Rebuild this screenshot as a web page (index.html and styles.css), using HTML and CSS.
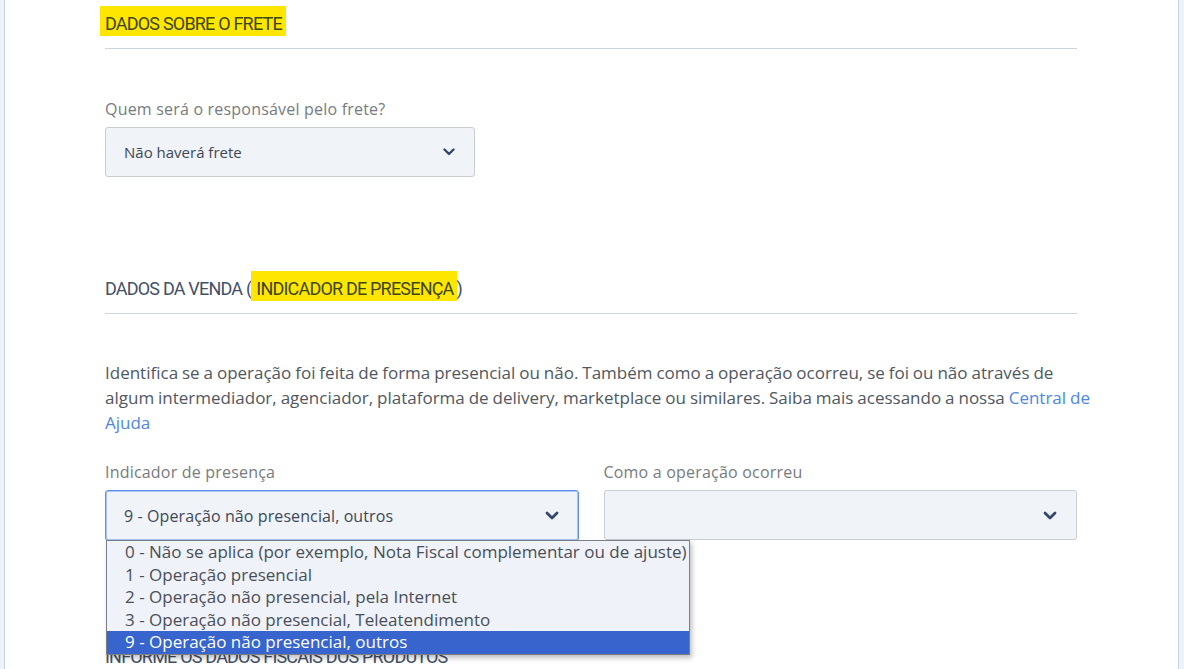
FILE: index.html
```html
<!DOCTYPE html>
<html lang="pt-BR">
<head>
    <meta charset="UTF-8">
    <title>Emissão de NF-e - Dados da venda</title>
    <link rel="stylesheet" href="styles.css">
</head>
<body>
    <div class="page">
        <div class="form">
            <!-- frete -->
            <section class="section section--frete">
                <h2 class="section__title"><span class="mark mark--first">DADOS SOBRE O FRETE</span></h2>
                <div class="field field--half">
                    <label class="field__label">Quem será o responsável pelo frete?</label>
                    <div class="select">
                        <span class="select__value">Não haverá frete</span>
                        <svg class="select__arrow" width="12" height="8" viewBox="0 0 12 8"><path d="M1.5 1.5 6 6l4.5-4.5" fill="none" stroke="currentColor" stroke-width="2.4" stroke-linecap="round" stroke-linejoin="round"/></svg>
                    </div>
                </div>
            </section>

            <!-- venda -->
            <section class="section section--venda">
                <h2 class="section__title">DADOS DA VENDA (<span class="mark">INDICADOR DE PRESENÇA</span>)</h2>
                <p class="section__text">
                    Identifica se a operação foi feita de forma presencial ou não. Também como a operação ocorreu, se foi ou não através de
                    algum intermediador, agenciador, plataforma de delivery, marketplace ou similares. Saiba mais acessando a nossa <a href="#" class="link">Central de Ajuda</a>
                </p>
                <div class="row">
                    <div class="field">
                        <label class="field__label">Indicador de presença</label>
                        <div class="select select--open">
                            <span class="select__value select__value--big">9 - Operação não presencial, outros</span>
                            <svg class="select__arrow" width="14" height="9" viewBox="0 0 14 9"><path d="M2 2l5 5 5-5" fill="none" stroke="currentColor" stroke-width="2.8" stroke-linecap="round" stroke-linejoin="round"/></svg>
                            <ul class="options">
                                <li class="option">0 - Não se aplica (por exemplo, Nota Fiscal complementar ou de ajuste)</li>
                                <li class="option">1 - Operação presencial</li>
                                <li class="option">2 - Operação não presencial, pela Internet</li>
                                <li class="option">3 - Operação não presencial, Teleatendimento</li>
                                <li class="option option--active">9 - Operação não presencial, outros</li>
                            </ul>
                        </div>
                    </div>
                    <div class="field">
                        <label class="field__label">Como a operação ocorreu</label>
                        <div class="select">
                            <span class="select__value"></span>
                            <svg class="select__arrow" width="14" height="9" viewBox="0 0 14 9"><path d="M2 2l5 5 5-5" fill="none" stroke="currentColor" stroke-width="2.8" stroke-linecap="round" stroke-linejoin="round"/></svg>
                        </div>
                    </div>
                </div>
            </section>

            <!-- produtos -->
            <section class="section section--produtos">
                <h2 class="section__title">INFORME OS DADOS FISCAIS DOS PRODUTOS</h2>
            </section>
        </div>
    </div>
</body>
</html>
```

FILE: styles.css
```css
html,
body {
    margin: 0;
    height: 100%;
    overflow: hidden;
}

body {
    font-family: "Open Sans", Lato, sans-serif;
    font-size: 16px;
    color: #555c66;
    background: #eef2f9;
}

.page {
    box-sizing: border-box;
    height: 100%;
    margin: 0 5px 0 4px;
    background: #fff;
    border-left: 1px solid #c9d2e4;
    border-right: 1px solid #c9d2e4;
}

.form {
    width: 972px;
    margin-left: 100px;
}

/* секции */
.section__title {
    margin: 0;
    padding: 6px 0 12px;
    font-family: Roboto, "Liberation Sans", sans-serif;
    font-size: 18px;
    font-weight: normal;
    letter-spacing: -0.8px;
    line-height: 24px;
    color: #435066;
    border-bottom: 1px solid #cfd5df;
}

/* жёлтая подсветка, на всю высоту строки заголовка */
.mark {
    display: inline-block;
    margin-top: -6px;
    padding: 6px 3px 0 5px;
    background: #ffe600;
    color: #3b4716;
}

.mark--first {
    margin-left: -5px;
    padding: 6px 4px 0 5px;
}

.section--frete {
    padding-top: 6px;
}

.section--venda {
    padding-top: 94px;
}

.section--produtos {
    padding-top: 98px;
}

.section--produtos .section__title {
    border-bottom: none;
}

.section__text {
    margin: 46px -28px 0 0;
    font-size: 17px;
    word-spacing: -0.5px;
    line-height: 25px;
    color: #50575f;
}

.link {
    color: #4f86e6;
    text-decoration: none;
}

/* поля */
.section--frete .field {
    margin-top: 50px;
}

.field--half {
    width: 370px;
}

.field__label {
    display: block;
    margin-bottom: 8px;
    letter-spacing: 0.2px;
    line-height: 20px;
    color: #777b80;
}

.row {
    display: flex;
    gap: 25px;
    margin-top: 27px;
}

.row .field {
    flex: 1;
}

.select {
    position: relative;
    box-sizing: border-box;
    display: flex;
    align-items: center;
    justify-content: space-between;
    height: 50px;
    padding: 0 19px 0 18px;
    background: #f0f3f8;
    border: 1px solid #c8ccd3;
    border-radius: 3px;
}

.select__value {
    font-size: 15px;
    color: #3f4856;
}

.select__value--big {
    font-size: 16px;
    letter-spacing: 0.1px;
}

.select__arrow {
    color: #34476a;
}

.select--open {
    height: 51px;
    border: 1px solid #5f8fe9;
    box-shadow: 0 0 0 1px #a9c3f3 inset;
}

/* выпадающий список */
.options {
    position: absolute;
    top: 100%;
    left: 0;
    z-index: 2;
    margin: 0;
    padding: 0;
    list-style: none;
    background: #eff2f8;
    border: 1px solid #7b7e84;
    box-shadow: 2px 3px 5px rgba(0, 0, 0, 0.25);
    white-space: nowrap;
}

.option {
    padding: 0 2px 0 18px;
    font-size: 17px;
    line-height: 22.6px;
    color: #4a4f57;
}

.option--active {
    background: #3764cd;
    color: #fff;
}
```
